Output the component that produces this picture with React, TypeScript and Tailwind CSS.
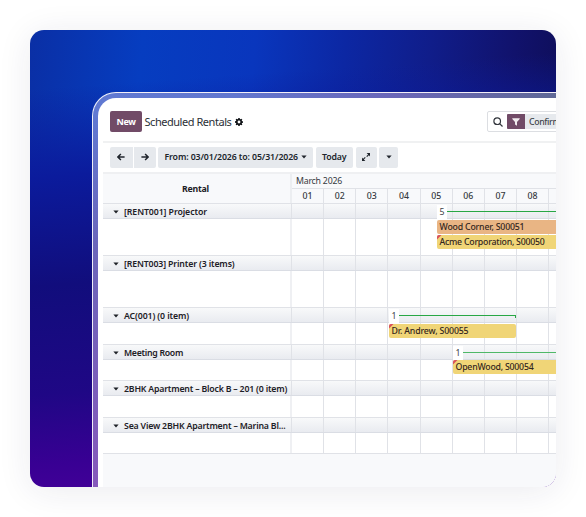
import type { ReactNode } from 'react';
import clsx from 'clsx';

type Booking = {
  label: string;
  tracking: string;
  color: string;
  place: string;
  flagged?: boolean;
};

type Group = {
  name: string;
  tracking: string;
  height: string;
  summary?: { count: number; place: string; line: string; end?: boolean };
  bookings?: Booking[];
};

const DAYS = ['01', '02', '03', '04', '05', '06', '07', '08'];

const GROUPS: Group[] = [
  {
    name: '[RENT001] Projector',
    tracking: 'tracking-[-0.09px]',
    height: 'h-[37px]',
    summary: { count: 5, place: 'left-[145px] w-[140px]', line: 'bg-[#28a745]' },
    bookings: [
      {
        label: 'Wood Corner, S00051',
        tracking: 'tracking-[-0.18px]',
        color: 'bg-[#e9b584]',
        place: 'left-[145px] top-[1px] w-[140px]',
      },
      {
        label: 'Acme Corporation, S00050',
        tracking: 'tracking-[-0.23px]',
        color: 'bg-[#f0d577]',
        place: 'left-[145px] top-[16px] w-[140px]',
        flagged: true,
      },
    ],
  },
  { name: '[RENT003] Printer (3 items)', tracking: 'tracking-[-0.14px]', height: 'h-[37px]' },
  {
    name: 'AC(001) (0 item)',
    tracking: 'tracking-[-0.11px]',
    height: 'h-[22px]',
    summary: { count: 1, place: 'left-[97px] w-[127px]', line: 'bg-[#28a745]', end: true },
    bookings: [
      {
        label: 'Dr. Andrew, S00055',
        tracking: 'tracking-[-0.145px]',
        color: 'bg-[#f0d577]',
        place: 'left-[97px] top-[1px] w-[127px]',
        flagged: true,
      },
    ],
  },
  {
    name: 'Meeting Room',
    tracking: 'tracking-[-0.29px]',
    height: 'h-[21px]',
    summary: { count: 1, place: 'left-[161px] w-[120px]', line: 'bg-[#4fb868]' },
    bookings: [
      {
        label: 'OpenWood, S00054',
        tracking: 'tracking-[-0.22px]',
        color: 'bg-[#f0d577]',
        place: 'left-[161px] top-0 w-[120px]',
        flagged: true,
      },
    ],
  },
  {
    name: '2BHK Apartment – Block B – 201 (0 item)',
    tracking: 'tracking-[-0.195px]',
    height: 'h-[22px]',
  },
  {
    name: 'Sea View 2BHK Apartment – Marina Bl...',
    tracking: 'tracking-[-0.187px]',
    height: 'h-[21px]',
  },
];

function Caret({ className }: { className?: string }) {
  return (
    <svg viewBox="0 0 6 4" className={clsx('h-1 w-1.5 shrink-0 fill-current', className)}>
      <path d="M0.4 0.5h5.2L3 3.4z" />
    </svg>
  );
}

function Arrow({ flip }: { flip?: boolean }) {
  return (
    <svg
      viewBox="0 0 8 8"
      className={clsx('size-2 fill-none stroke-current stroke-[1.5]', flip && 'rotate-180')}
    >
      <path d="M7.6 4H1M3.9 1L0.9 4l3 3" />
    </svg>
  );
}

function ToolButton({ className, children }: { className: string; children: ReactNode }) {
  return (
    <button
      className={clsx(
        'flex h-full items-center justify-center bg-[#e6e9ed] font-semibold text-[#20252c]',
        className,
      )}
    >
      {children}
    </button>
  );
}

/** Empty day cells that carry the vertical grid lines of a row. */
function DayCells() {
  return (
    <div className="grid h-full w-[257.2px] shrink-0 grid-cols-8">
      {DAYS.map((day) => (
        <div key={day} className="border-r border-[#e0e2e7]" />
      ))}
    </div>
  );
}

function BookingBar({ booking }: { booking: Booking }) {
  return (
    <div
      className={clsx(
        'absolute flex h-[14px] items-center overflow-hidden rounded-[2px] pl-[2.5px] font-medium text-[#33251d]',
        booking.color,
        booking.place,
      )}
    >
      {booking.flagged && (
        <svg viewBox="0 0 4 4" className="absolute top-0 left-0 size-[4.5px] fill-[#d9505c]">
          <path d="M0 0h4L0 4z" />
        </svg>
      )}
      <span className={clsx('relative', booking.tracking)}>{booking.label}</span>
    </div>
  );
}

function GroupRows({ group }: { group: Group }) {
  const { summary, bookings = [] } = group;
  return (
    <>
      <div className="flex h-[15px] border-b border-[#dadde4] bg-linear-to-b from-[#f8f9fa] to-[#e9ebf0]">
        <div className="flex w-[189px] shrink-0 items-center border-r border-[#e0e2e7] pt-px pl-[10px] font-semibold text-[#1d2026]">
          <Caret />
          <span className={clsx('ml-[5px]', group.tracking)}>{group.name}</span>
        </div>
        <div className="relative">
          <DayCells />
          {summary && (
            <div className={clsx('absolute top-0 flex h-[15px] items-center', summary.place)}>
              <span className="flex h-[14px] w-[10px] shrink-0 items-center justify-center bg-white text-[#3d4148]">
                {summary.count}
              </span>
              <span className={clsx('h-px flex-1', summary.line)} />
              {summary.end && <span className="mt-[2px] h-[3px] w-px bg-[#28a745]" />}
            </div>
          )}
        </div>
      </div>
      <div className={clsx('flex border-b border-[#e0e2e7] bg-white', group.height)}>
        <div className="w-[189px] shrink-0 border-r-2 border-[#eff0f3]" />
        <div className="relative">
          <DayCells />
          {bookings.map((booking) => (
            <BookingBar key={booking.label} booking={booking} />
          ))}
        </div>
      </div>
    </>
  );
}

function ControlPanel() {
  return (
    <header className="flex h-[45px] items-center border-b-2 border-[#f0f1f2] pt-[4px] pl-[7px]">
      <button className="flex h-[21px] w-8 shrink-0 items-center justify-center rounded-[2px] bg-[#714b67] text-[9px] font-bold tracking-[-0.45px] text-white">
        New
      </button>
      <h1 className="ml-[2.5px] w-[87px] shrink-0 text-[11px] tracking-[-0.46px] text-[#2b2f36]">
        Scheduled Rentals
      </h1>
      <svg viewBox="0 0 16 16" className="ml-[3.5px] size-[8px] shrink-0">
        <path
          fillRule="evenodd"
          className="fill-[#111418]"
          d="M6.6 0h2.8l.4 2.1 1.2.5L12.8 1.4 14.7 3.3 13.5 5.1l.5 1.2L16 6.6v2.8l-2 .4-.5 1.2 1.2 1.8-1.9 1.9-1.8-1.2-1.2.5L9.4 16H6.6l-.4-2-1.2-.5-1.8 1.2-1.9-1.9L2.5 11 2 9.8 0 9.4V6.6l2-.4.5-1.2L1.3 3.2 3.2 1.3 5 2.5 6.2 2zM8 5.2a2.800 2.800 0 1 0 0 5.600 2.800 2.800 0 0 0 0-5.600z"
        />
      </svg>
      <div className="ml-[243.5px] flex h-[21px] w-[200px] shrink-0 items-center rounded-[2px] border border-[#dcdee2] pl-[5px]">
        <svg viewBox="0 0 10 10" className="size-[10px] fill-none stroke-[#33373d] stroke-[1.2]">
          <circle cx="4.2" cy="4.2" r="3.3" />
          <path d="M6.6 6.6l2.9 2.9" />
        </svg>
        <div className="ml-[4.5px] flex h-[15px] w-[120px] items-center bg-[#e6e9ed]">
          <span className="flex h-full w-[18px] items-center justify-center rounded-l-[1px] bg-[#714b67]">
            <svg viewBox="0 0 8 8" className="size-[8px] fill-[#f1ecef]">
              <path d="M.3.3h7.4v.8L5 4v3.8L3 6.5V4L.3 1.1z" />
            </svg>
          </span>
          <span className="ml-[4px] font-medium tracking-[-0.35px] text-[#3f444b]">Confirmed</span>
        </div>
      </div>
    </header>
  );
}

function RangeToolbar() {
  return (
    <div className="h-[31px] border-b-2 border-[#eff0f2] pt-[4px] pl-[7px]">
      <div className="flex h-[20.5px] gap-[2.5px]">
        <div className="flex gap-px">
          <ToolButton className="w-[22.5px] rounded-l-[2px]">
            <Arrow />
          </ToolButton>
          <ToolButton className="w-[22px] rounded-r-[2px]">
            <Arrow flip />
          </ToolButton>
        </div>
        <ToolButton className="w-[155px] rounded-[2px]">
          <span className="tracking-[-0.106px]">From: 03/01/2026 to: 05/31/2026</span>
          <Caret className="ml-[2.5px]" />
        </ToolButton>
        <ToolButton className="w-[37.5px] rounded-[2px]">
          <span className="tracking-[-0.13px]">Today</span>
        </ToolButton>
        <ToolButton className="w-[21px] rounded-[2px]">
          <svg viewBox="0 0 8 8" className="size-2 fill-current">
            <path d="M4.6 0H8v3.4L6.9 2.3 5.1 4.1l-.8-.8L6.1 1.5zM3.4 8H0V4.6l1.1 1.1 1.8-1.8.8.8-1.8 1.8z" />
          </svg>
        </ToolButton>
        <ToolButton className="w-[19px] rounded-[2px]">
          <Caret />
        </ToolButton>
      </div>
    </div>
  );
}

function Gantt() {
  return (
    <main className="flex-1 bg-[#f8f9fb]">
      <div className="flex h-[30px] border-b border-[#e0e2e7]">
        <div className="flex w-[189px] shrink-0 items-center justify-center border-r-2 border-[#eceef1] pr-0.5 font-bold tracking-[-0.21px] text-[#1d2026]">
          Rental
        </div>
        <div className="flex-1">
          <div className="flex h-[15px] items-center border-b border-[#e0e2e7] pl-1 tracking-[-0.22px] text-[#363a41]">
            March 2026
          </div>
          <div className="grid h-[14px] w-[257.2px] grid-cols-8">
            {DAYS.map((day) => (
              <div
                key={day}
                className="flex items-center justify-center border-r border-[#e0e2e7] font-medium text-[#363a41]"
              >
                {day}
              </div>
            ))}
          </div>
        </div>
      </div>
      {GROUPS.map((group) => (
        <GroupRows key={group.name} group={group} />
      ))}
    </main>
  );
}

export default function App() {
  return (
    <div className="flex h-[517px] w-[586px] overflow-hidden bg-white p-[30px] font-['Noto_Sans','Open_Sans',sans-serif] text-[8.75px] leading-[14px] whitespace-nowrap">
      <div className="h-[457px] w-[526px] overflow-hidden rounded-[14px] bg-[linear-gradient(176deg,#0b1fa000_12%,#0b1b9c_30%,#110d7c_52%,#1f0785_74%,#380093_88%,#47009b_98%),linear-gradient(95deg,#0a2fa5_0%,#063dc0_20%,#0936bd_40%,#0c27a3_56%,#101d8a_71%,#11126c_86%,#0d0c50_100%)] pt-[62px] pl-[62px] shadow-[0_4px_34px_rgba(30,30,80,0.09)]">
        <div className="h-[395px] w-[464px] overflow-hidden rounded-tl-[24px] border-t border-l border-white/90 bg-[linear-gradient(to_bottom,#6a74c800_5%,#6b65ba_40%,#8659bb_100%),linear-gradient(to_right,#6079d2_0%,#6277cf_30%,#6a66b8_65%,#5f6896_100%)] pt-[5px] pl-[5px]">
          <div className="flex h-full flex-col overflow-hidden rounded-tl-[18px] bg-white pl-[5px]">
            <ControlPanel />
            <RangeToolbar />
            <Gantt />
          </div>
        </div>
      </div>
    </div>
  );
}
